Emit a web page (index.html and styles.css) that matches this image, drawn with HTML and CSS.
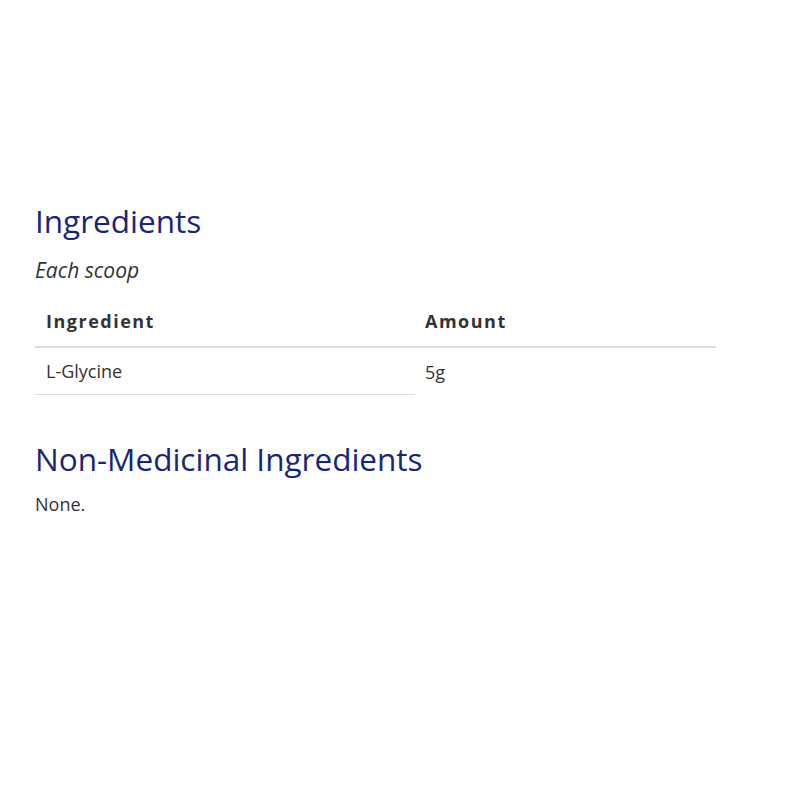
FILE: index.html
```html
<!DOCTYPE html>
<html>
<head>
<meta charset="utf-8">
<link rel="stylesheet" href="styles.css">
</head>
<body>
<main class="content">
  <h2 class="title">Ingredients</h2>
  <p class="serving">Each scoop</p>
  <table class="ing-table">
    <thead>
      <tr><th class="col-name">Ingredient</th><th class="col-amt">Amount</th></tr>
    </thead>
    <tbody>
      <tr><td class="cell-name">L-Glycine</td><td class="cell-amt">5g</td></tr>
    </tbody>
  </table>
  <h2 class="title title-2">Non-Medicinal Ingredients</h2>
  <p class="body-text">None.</p>
</main>
</body>
</html>
```
FILE: styles.css
```css
html, body { margin: 0; padding: 0; background: #fff; }
body { font-family: "Open Sans", "Noto Sans", sans-serif; color: #333; }
.content { padding: 202px 35px 0 35px; width: 681px; }
.title { margin: 0; font-size: 31.5px; font-weight: 400; color: #182679; line-height: 37.8px; }
.serving { margin: 15px 0 0; font-style: italic; font-size: 21px; line-height: 30px; }
.ing-table { width: 681px; border-collapse: collapse; margin-top: 10.7px; }
.ing-table th { text-align: left; font-weight: 700; font-size: 18px; letter-spacing: 1.5px; padding: 13px 10px 10.5px 11px; border-bottom: 2px solid #ddd; line-height: 27px; }
.ing-table th.col-amt { padding-left: 10px; }
.col-name { width: 359px; }
.ing-table td { font-size: 18px; line-height: 27px; padding: 10.5px 10px 8.5px 11px; }
.ing-table td.cell-amt { padding-left: 10px; }
.cell-name { border-bottom: 1px solid #ddd; }
.title-2 { margin-top: 44.9px; }
.body-text { margin: 13.5px 0 0; font-size: 18px; line-height: 27px; }
```
